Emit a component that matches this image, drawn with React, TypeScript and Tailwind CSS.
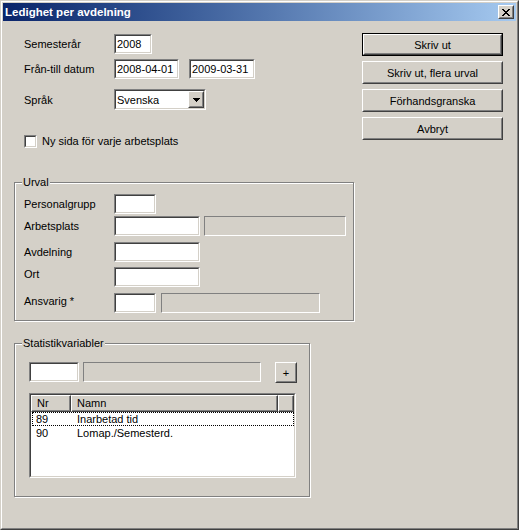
import type { ReactNode } from "react";

// pixel glyphs, 1 = black
const CLOSE_X = ["11000011", "01100110", "00111100", "00011000", "00111100", "01100110", "11000011"];
const DOWN_ARROW = ["1111111", "0111110", "0011100", "0001000"];

function Pixels({ rows }: { rows: string[] }) {
  return (
    <svg width={rows[0].length} height={rows.length} shapeRendering="crispEdges" className="block">
      {rows.flatMap((r, y) =>
        r.split("").map((c, x) => (c === "1" ? <rect key={`${x}-${y}`} x={x} y={y} width={1} height={1} fill="#000" /> : null))
      )}
    </svg>
  );
}

// klassisk nedsänkt ram (2px)
function Sunken({ className = "", children }: { className?: string; children?: ReactNode }) {
  return (
    <div className={`border border-t-[#808080] border-l-[#808080] border-r-white border-b-white ${className}`}>
      <div className="h-full w-full overflow-hidden border border-t-[#404040] border-l-[#404040] border-r-[#d4d0c8] border-b-[#d4d0c8] bg-white">
        {children}
      </div>
    </div>
  );
}

function Raised({ className = "", children }: { className?: string; children?: ReactNode }) {
  return (
    <div className={`border border-t-white border-l-white border-r-[#404040] border-b-[#404040] bg-[#d4d0c8] ${className}`}>
      <div className="flex h-full w-full items-center justify-center border border-t-[#d4d0c8] border-l-[#d4d0c8] border-r-[#808080] border-b-[#808080]">
        {children}
      </div>
    </div>
  );
}

function Edit({ className = "", value = "" }: { className?: string; value?: string }) {
  return (
    <Sunken className={`h-[20px] shrink-0 ${className}`}>
      <div className="pl-[1px] leading-[16px]">{value}</div>
    </Sunken>
  );
}

function Static({ className = "" }: { className?: string }) {
  return <div className={`h-[20px] shrink-0 border border-t-[#808080] border-l-[#808080] border-r-white border-b-white ${className}`} />;
}

function Group({ label, className = "", children }: { label: string; className?: string; children?: ReactNode }) {
  return (
    <div className={`relative border border-[#808080] shadow-[inset_1px_1px_0_#fff,1px_1px_0_#fff] ${className}`}>
      <span className="absolute -top-[7px] left-[7px] bg-[#d4d0c8] px-[1px] leading-[13px]">{label}</span>
      {children}
    </div>
  );
}

function HeaderCell({ className = "", children }: { className?: string; children?: ReactNode }) {
  return (
    <div className={`h-[17px] shrink-0 border border-t-white border-l-white border-r-[#404040] border-b-[#404040] bg-[#d4d0c8] ${className}`}>
      <div className="h-full border-r border-b border-r-[#808080] border-b-[#808080] pl-[5px] leading-[14px]">{children}</div>
    </div>
  );
}

const BUTTONS = ["Skriv ut, flera urval", "Förhandsgranska", "Avbryt"];

const STATS = [
  { nr: "89", namn: "Inarbetad tid", focus: true },
  { nr: "90", namn: "Lomap./Semesterd.", focus: false },
];

export default function App() {
  return (
    <div className="h-[530px] w-[519px] border border-t-[#d4d0c8] border-l-[#d4d0c8] border-r-[#404040] border-b-[#404040] bg-[#d4d0c8] font-['Liberation_Sans',Arial,sans-serif] text-[11px] leading-[16px] text-black">
      <div className="h-full w-full border border-t-white border-l-white border-r-[#808080] border-b-[#808080] p-[1px]">
        {/* titelrad */}
        <div className="flex h-[18px] items-center justify-between bg-linear-to-r from-[#0a246a] to-[#a6caf0] pl-[2px] pr-[2px]">
          <span className="text-[11.5px] font-bold leading-[18px] text-white">Ledighet per avdelning</span>
          <Raised className="h-[14px] w-[16px]">
            <Pixels rows={CLOSE_X} />
          </Raised>
        </div>

        <div className="flex">
          {/* vänster kolumn */}
          <div className="w-[359px] shrink-0">
            <div className="pl-[21px] pt-[13px]">
              <div className="flex h-[20px] items-center">
                <span className="w-[90px] shrink-0">Semesterår</span>
                <Edit className="w-[38px]" value="2008" />
              </div>
              <div className="mt-[5px] flex h-[20px] items-center">
                <span className="w-[90px] shrink-0">Från-till datum</span>
                <Edit className="w-[65px]" value="2008-04-01" />
                <Edit className="ml-[10px] w-[66px]" value="2009-03-31" />
              </div>
              <div className="mt-[10px] flex h-[21px] items-center">
                <span className="w-[90px] shrink-0">Språk</span>
                <Sunken className="h-[21px] w-[92px]">
                  <div className="flex h-full items-center justify-between">
                    <span className="pl-[1px]">Svenska</span>
                    <Raised className="h-full w-[16px]">
                      <Pixels rows={DOWN_ARROW} />
                    </Raised>
                  </div>
                </Sunken>
              </div>
              <div className="mt-[25px] flex h-[13px] items-center gap-[5px] leading-[13px]">
                <Sunken className="h-[13px] w-[13px]" />
                <span>Ny sida för varje arbetsplats</span>
              </div>
            </div>

            <Group label="Urval" className="ml-[11px] mt-[34px] h-[139px] w-[340px]">
              <div className="pl-[9px] pt-[11px]">
                <div className="flex h-[20px] items-center">
                  <span className="w-[90px] shrink-0">Personalgrupp</span>
                  <Edit className="w-[42px]" />
                </div>
                <div className="mt-[2px] flex h-[20px] items-center">
                  <span className="w-[90px] shrink-0">Arbetsplats</span>
                  <Edit className="w-[86px]" />
                  <Static className="ml-[4px] w-[142px]" />
                </div>
                <div className="mt-[6px] flex h-[20px] items-center">
                  <span className="w-[90px] shrink-0">Avdelning</span>
                  <Edit className="w-[86px]" />
                </div>
                <div className="mt-[5px] flex h-[20px] items-center">
                  <span className="mb-[6px] w-[90px] shrink-0">Ort</span>
                  <Edit className="w-[86px]" />
                </div>
                <div className="mt-[6px] flex h-[20px] items-center">
                  <span className="mb-[4px] w-[90px] shrink-0">Ansvarig *</span>
                  <Edit className="w-[42px]" />
                  <Static className="ml-[5px] w-[159px]" />
                </div>
              </div>
            </Group>

            <Group label="Statistikvariabler" className="ml-[11px] mt-[22px] h-[154px] w-[296px]">
              <div className="pl-[14px] pt-[18px]">
                <div className="flex items-start">
                  <Edit className="w-[50px]" />
                  <Static className="ml-[4px] w-[178px]" />
                  <Raised className="ml-[14px] h-[21px] w-[22px]">
                    <span className="leading-[12px]">+</span>
                  </Raised>
                </div>
                <Sunken className="mt-[10px] h-[85px] w-[267px]">
                  <div className="flex">
                    <HeaderCell className="w-[40px]">Nr</HeaderCell>
                    <HeaderCell className="w-[207px]">Namn</HeaderCell>
                    <HeaderCell className="flex-1" />
                  </div>
                  {STATS.map((s) => (
                    <div
                      key={s.nr}
                      className={`ml-[1px] flex h-[14px] items-center border leading-[12px] ${s.focus ? "border-dotted border-black" : "border-transparent"}`}
                    >
                      <span className="w-[38px] shrink-0 pl-[3px]">{s.nr}</span>
                      <span className="pl-[6px]">{s.namn}</span>
                    </div>
                  ))}
                </Sunken>
              </div>
            </Group>
          </div>

          {/* knappar */}
          <div className="flex flex-col gap-[5px] pt-[12px]">
            <div className="h-[23px] w-[141px] border border-black">
              <Raised className="h-full w-full">Skriv ut</Raised>
            </div>
            {BUTTONS.map((b) => (
              <Raised key={b} className="h-[23px] w-[141px]">
                {b}
              </Raised>
            ))}
          </div>
        </div>
      </div>
    </div>
  );
}
